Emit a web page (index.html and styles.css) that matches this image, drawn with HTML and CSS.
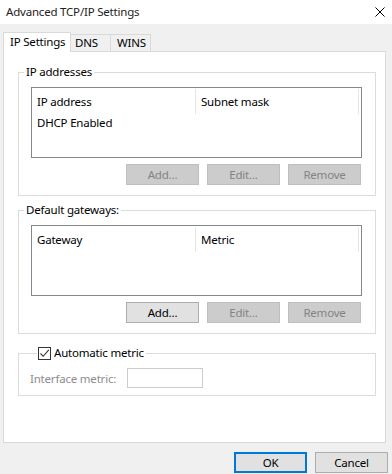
FILE: index.html
```html
<!DOCTYPE html>
<html lang="en">
<head>
    <meta charset="UTF-8">
    <title>Advanced TCP/IP Settings</title>
    <link rel="stylesheet" href="styles.css">
</head>
<body>
    <div class="window">
        <div class="titlebar">
            <span class="title">Advanced TCP/IP Settings</span>
            <svg class="close" width="10" height="10" viewBox="0 0 10 10">
                <path d="M0.5 0.5 L9.5 9.5 M9.5 0.5 L0.5 9.5" stroke="#000" stroke-width="1" fill="none"/>
            </svg>
        </div>

        <div class="tabs">
            <div class="tab active">IP Settings</div>
            <div class="tab tab-dns">DNS</div>
            <div class="tab tab-wins">WINS</div>
        </div>

        <div class="panel">
            <!-- IP addresses -->
            <fieldset class="group">
                <legend>IP addresses</legend>
                <div class="group-body">
                    <div class="listview">
                        <div class="list-head">
                            <div class="col col-a">IP address</div>
                            <div class="col col-b">Subnet mask</div>
                        </div>
                        <div class="list-row">DHCP Enabled</div>
                    </div>
                    <div class="btn-row">
                        <button class="btn" disabled>Add...</button>
                        <button class="btn" disabled>Edit...</button>
                        <button class="btn" disabled>Remove</button>
                    </div>
                </div>
            </fieldset>

            <!-- Default gateways -->
            <fieldset class="group">
                <legend>Default gateways:</legend>
                <div class="group-body">
                    <div class="listview">
                        <div class="list-head">
                            <div class="col col-a">Gateway</div>
                            <div class="col col-b">Metric</div>
                        </div>
                    </div>
                    <div class="btn-row">
                        <button class="btn">Add...</button>
                        <button class="btn" disabled>Edit...</button>
                        <button class="btn" disabled>Remove</button>
                    </div>
                </div>
            </fieldset>

            <!-- Automatic metric -->
            <fieldset class="group metric-group">
                <legend class="check-legend"><span class="checkbox"><svg width="11" height="11" viewBox="0 0 11 11"><path d="M1.5 5.5 L4.2 8.3 L9.8 1.8" stroke="#333" stroke-width="1.1" fill="none"/></svg></span><span class="check-label">Automatic metric</span></legend>
                <div class="metric-row">
                    <span class="muted">Interface metric:</span>
                    <span class="textbox"></span>
                </div>
            </fieldset>
        </div>

        <div class="footer">
            <button class="btn default">OK</button>
            <button class="btn">Cancel</button>
        </div>
    </div>
</body>
</html>
```

FILE: styles.css
```css
* {
    box-sizing: border-box;
}
body {
    margin: 0;
    font-family: "Noto Sans", "Liberation Sans", sans-serif;
    font-size: 11.5px;
    letter-spacing: -0.2px;
    color: #000;
    background: #f0f0f0;
}
.window {
    width: 392px;
    height: 474px;
    overflow: hidden;
    background: #f0f0f0;
}
.titlebar {
    height: 24px;
    background: #fff;
    display: flex;
    align-items: center;
    justify-content: space-between;
    padding: 0 7px 0 6px;
}
.title {
    color: #222;
    margin-top: -1px;
}
.close {
    display: block;
}
.tabs {
    display: flex;
    align-items: flex-end;
    padding-left: 3px;
    height: 28px;
    position: relative;
    z-index: 1;
}
.tab {
    height: 17px;
    width: 40px;
    border: 1px solid #d9d9d9;
    border-bottom: none;
    border-left: none;
    background: #f0f0f0;
    line-height: 15px;
    white-space: nowrap;
    margin-bottom: 1px;
}
.tab-dns {
    padding-left: 4px;
}
.tab-wins {
    padding-left: 6px;
}
.tab.active {
    width: 68px;
    height: 20px;
    border-left: 1px solid #d9d9d9;
    background: #fff;
    line-height: 18px;
    padding-left: 6px;
    margin-bottom: 0;
}
.panel {
    margin: -1px 6px 0 3px;
    height: 392px;
    background: #fff;
    border: 1px solid #d9d9d9;
    padding: 12px 10px 0 14px;
}
.group {
    margin: 0 0 6px 0;
    padding: 7px 0 10px 0;
    border: 1px solid #dcdcdc;
    width: 358px;
    min-width: 0;
}
.group legend {
    padding: 0 2px;
    margin-left: 5px;
    line-height: 16px;
}
.group-body {
    padding: 0 13px 0 12px;
}
.listview {
    height: 71px;
    border: 1px solid #828790;
    background: #fff;
}
.list-head {
    display: flex;
    height: 26px;
    padding-top: 1px;
}
.col {
    height: 25px;
    line-height: 26px;
    padding-left: 5px;
    border-right: 1px solid #e5e5e5;
}
.col-a {
    width: 164px;
}
.col-b {
    width: 163px;
}
.list-row {
    padding-left: 5px;
    line-height: 17px;
    margin-top: 0;
}
.btn-row {
    display: flex;
    justify-content: flex-end;
    gap: 8px;
    margin-top: 6px;
    padding-right: 1px;
}
.btn {
    width: 73px;
    height: 21px;
    font-family: inherit;
    font-size: 11.5px;
    letter-spacing: -0.2px;
    color: #000;
    background: #e1e1e1;
    border: 1px solid #adadad;
    padding: 0;
    margin: 0;
}
.btn:disabled {
    background: #cccccc;
    border-color: #bfbfbf;
    color: #838383;
}
.btn.default {
    border: 2px solid #0078d7;
}
.metric-group {
    margin-top: 11px;
    padding: 7px 0 7px 11px;
}
.group .check-legend {
    margin-left: 7px;
    padding: 0 2px 0 1px;
    white-space: nowrap;
}
.checkbox {
    display: inline-block;
    width: 13px;
    height: 13px;
    border: 1px solid #333;
    background: #fff;
    vertical-align: -3px;
    margin-right: 3px;
}
.checkbox svg {
    display: block;
}
.metric-row {
    display: flex;
    align-items: center;
}
.muted {
    color: #8d8d8d;
    width: 97px;
}
.textbox {
    width: 76px;
    height: 20px;
    border: 1px solid #cccccc;
    background: #fff;
}
.footer {
    display: flex;
    justify-content: flex-end;
    gap: 8px;
    padding: 9px 4px 0 0;
}
```
